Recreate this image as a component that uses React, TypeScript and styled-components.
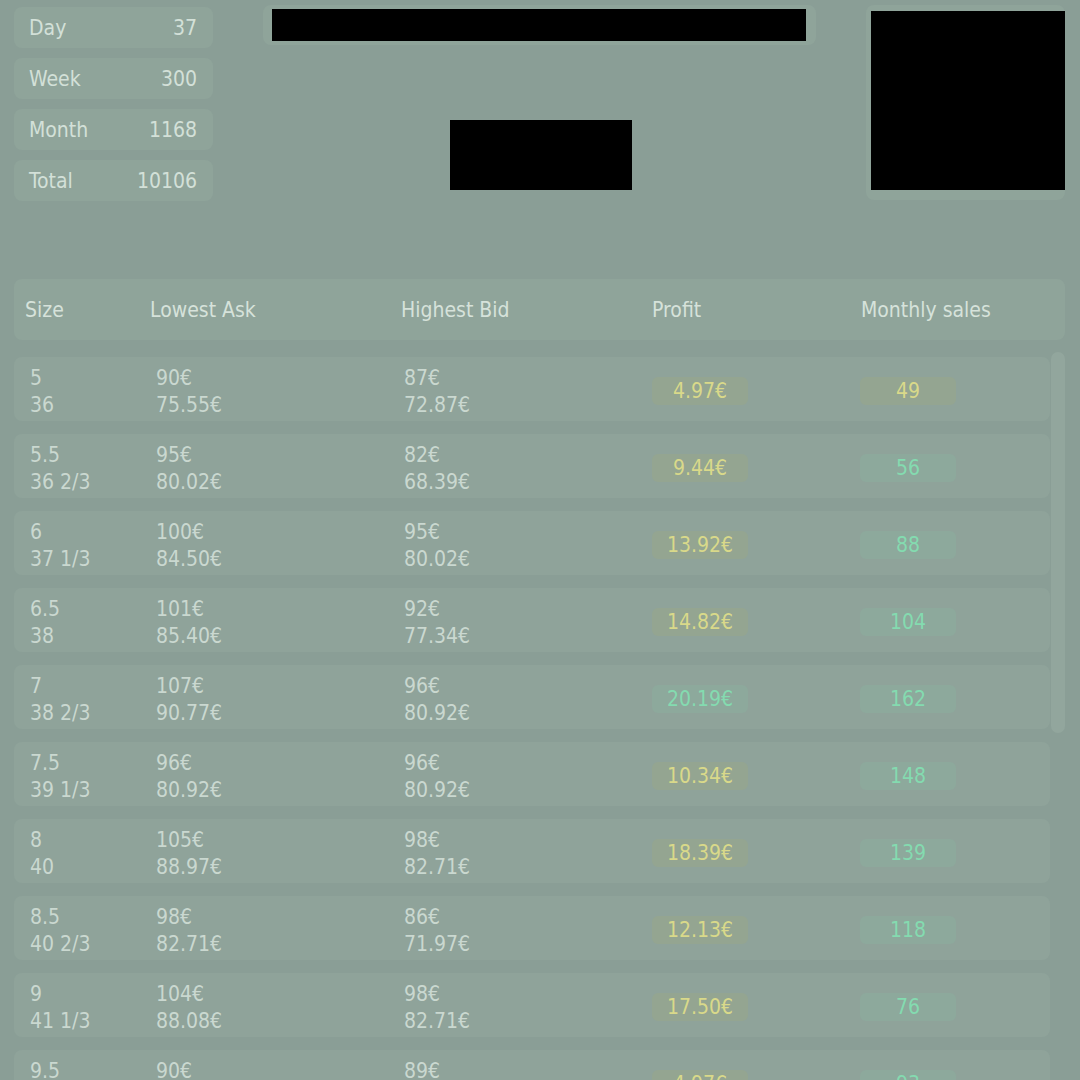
import React from "react";
import styled, { createGlobalStyle } from "styled-components";

const Global = createGlobalStyle`
  html, body { margin: 0; padding: 0; background: #8a9e96; }
  body { width: 1080px; height: 1080px; overflow: hidden; font-family: "DejaVu Sans Condensed", "DejaVu Sans", Verdana, sans-serif; }
`;

const Page = styled.div`
  width: 1080px;
  padding: 5px 15px 0 14px;
  box-sizing: border-box;
  display: flex;
  flex-direction: column;
`;

const Top = styled.div`
  display: grid;
  grid-template-columns: 199px 553px 199px;
  column-gap: 50px;
  height: 274px;
`;

const Stats = styled.div`
  display: flex;
  flex-direction: column;
  gap: 10px;
  padding-top: 2px;
`;

const StatCard = styled.div`
  height: 41px;
  border-radius: 8px;
  background: #8fa49a;
  display: flex;
  align-items: center;
  justify-content: space-between;
  padding: 0 16px 0 15px;
  color: #d3e0d8;
  font-size: 21px;
`;

const Middle = styled.div`
  display: flex;
  flex-direction: column;
  align-items: center;
`;

const TitleCard = styled.div`
  align-self: stretch;
  border-radius: 8px;
  background: #8fa49a;
  padding: 4px 10px 4px 9px;
`;

const Redacted = styled.div<{ $w?: number; $h: number }>`
  background: #000;
  height: ${(p) => p.$h}px;
  width: ${(p) => (p.$w ? `${p.$w}px` : "100%")};
`;

const LogoBox = styled.div`
  margin-top: 75px;
  margin-left: 3px;
`;

const ImageCard = styled.div`
  border-radius: 8px;
  background: #8fa49a;
  padding: 6px 0 10px 5px;
  height: 195px;
  box-sizing: border-box;
  display: flex;
`;

const HeaderCard = styled.div`
  height: 61px;
  border-radius: 8px;
  background: #8fa49a;
  display: grid;
  grid-template-columns: 125px 251px 251px 209px 1fr;
  align-items: center;
  padding: 1px 0 0 11px;
  box-sizing: border-box;
  color: #d6e2da;
  font-size: 21px;
`;

const Body = styled.div`
  display: flex;
  gap: 1px;
  margin-top: 12px;
`;

const Rows = styled.div`
  width: 1036px;
  display: flex;
  flex-direction: column;
  gap: 13px;
  padding-top: 5px;
`;

const Track = styled.div`
  width: 14px;
  display: flex;
  flex-direction: column;
`;

const Thumb = styled.div`
  height: 381px;
  border-radius: 7px;
  background: #92a69d;
`;

const Row = styled.div`
  height: 60px;
  padding: 4px 0 0 16px;
  border-radius: 8px;
  background: #8fa39a;
  display: grid;
  grid-template-columns: 126px 248px 248px 208px 1fr;
  align-items: center;
  color: #cad8d0;
  font-size: 21px;
`;

const Cell = styled.div`
  display: flex;
  flex-direction: column;
  line-height: 27px;
  margin-top: 2px;
`;

const Badge = styled.div<{ $tone: "yellow" | "green" }>`
  width: 96px;
  height: 28px;
  border-radius: 6px;
  display: flex;
  align-items: center;
  justify-content: center;
  font-size: 21px;
  color: ${(p) => (p.$tone === "yellow" ? "#d9d98a" : "#84dbb0")};
  background: ${(p) => (p.$tone === "yellow" ? "#94a591" : "#8da99c")};
`;

type Tone = "yellow" | "green";
const data: [string, string, string, string, string, string, string, Tone, string, Tone][] = [
  ["5", "36", "90€", "75.55€", "87€", "72.87€", "4.97€", "yellow", "49", "yellow"],
  ["5.5", "36 2/3", "95€", "80.02€", "82€", "68.39€", "9.44€", "yellow", "56", "green"],
  ["6", "37 1/3", "100€", "84.50€", "95€", "80.02€", "13.92€", "yellow", "88", "green"],
  ["6.5", "38", "101€", "85.40€", "92€", "77.34€", "14.82€", "yellow", "104", "green"],
  ["7", "38 2/3", "107€", "90.77€", "96€", "80.92€", "20.19€", "green", "162", "green"],
  ["7.5", "39 1/3", "96€", "80.92€", "96€", "80.92€", "10.34€", "yellow", "148", "green"],
  ["8", "40", "105€", "88.97€", "98€", "82.71€", "18.39€", "yellow", "139", "green"],
  ["8.5", "40 2/3", "98€", "82.71€", "86€", "71.97€", "12.13€", "yellow", "118", "green"],
  ["9", "41 1/3", "104€", "88.08€", "98€", "82.71€", "17.50€", "yellow", "76", "green"],
  ["9.5", "42", "90€", "75.55€", "89€", "74.55€", "4.97€", "yellow", "93", "green"],
];

const stats = [
  ["Day", "37"],
  ["Week", "300"],
  ["Month", "1168"],
  ["Total", "10106"],
];

export default function App() {
  return (
    <>
      <Global />
      <Page>
        <Top>
          <Stats>
            {stats.map(([k, v]) => (
              <StatCard key={k}>
                <span>{k}</span>
                <span>{v}</span>
              </StatCard>
            ))}
          </Stats>
          <Middle>
            <TitleCard>
              <Redacted $h={32} />
            </TitleCard>
            <LogoBox>
              <Redacted $w={182} $h={70} />
            </LogoBox>
          </Middle>
          <ImageCard>
            <Redacted $w={194} $h={179} />
          </ImageCard>
        </Top>
        <HeaderCard>
          <span>Size</span>
          <span>Lowest Ask</span>
          <span>Highest Bid</span>
          <span>Profit</span>
          <span>Monthly sales</span>
        </HeaderCard>
        <Body>
          <Rows>
            {data.map((r) => (
              <Row key={r[0]}>
                <Cell>
                  <span>{r[0]}</span>
                  <span>{r[1]}</span>
                </Cell>
                <Cell>
                  <span>{r[2]}</span>
                  <span>{r[3]}</span>
                </Cell>
                <Cell>
                  <span>{r[4]}</span>
                  <span>{r[5]}</span>
                </Cell>
                <Badge $tone={r[7]}>{r[6]}</Badge>
                <Badge $tone={r[9]}>{r[8]}</Badge>
              </Row>
            ))}
          </Rows>
          <Track>
            <Thumb />
          </Track>
        </Body>
      </Page>
    </>
  );
}
